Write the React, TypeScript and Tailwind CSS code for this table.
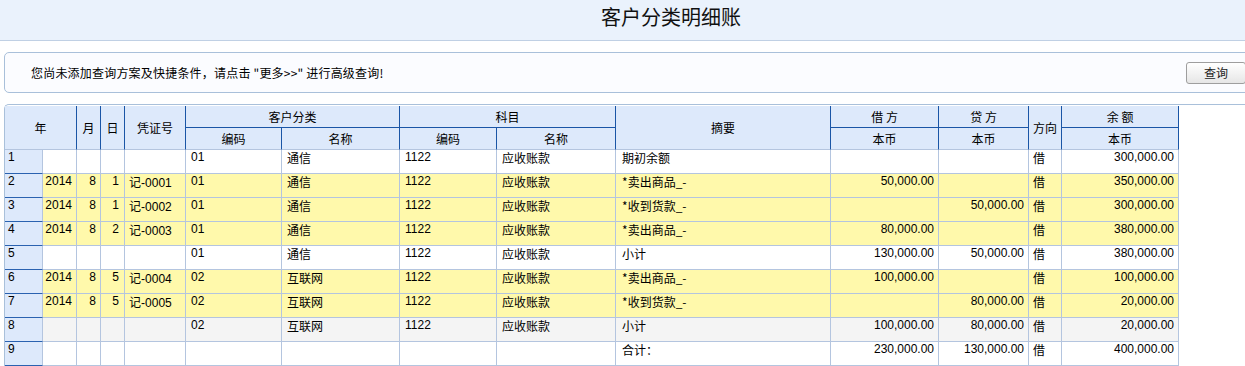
import React from 'react';

type Row = {
    n: number;
    y: string;
    m: string;
    d: string;
    v: string;
    c: string;
    cn: string;
    a: string;
    an: string;
    s: string;
    dr: string;
    cr: string;
    dir: string;
    bal: string;
    bg: 'white' | 'yellow' | 'gray';
};

const rows: Row[] = [
    { n: 1, y: '', m: '', d: '', v: '', c: '01', cn: '通信', a: '1122', an: '应收账款', s: '期初余额', dr: '', cr: '', dir: '借', bal: '300,000.00', bg: 'white' },
    { n: 2, y: '2014', m: '8', d: '1', v: '记-0001', c: '01', cn: '通信', a: '1122', an: '应收账款', s: '*卖出商品_-', dr: '50,000.00', cr: '', dir: '借', bal: '350,000.00', bg: 'yellow' },
    { n: 3, y: '2014', m: '8', d: '1', v: '记-0002', c: '01', cn: '通信', a: '1122', an: '应收账款', s: '*收到货款_-', dr: '', cr: '50,000.00', dir: '借', bal: '300,000.00', bg: 'yellow' },
    { n: 4, y: '2014', m: '8', d: '2', v: '记-0003', c: '01', cn: '通信', a: '1122', an: '应收账款', s: '*卖出商品_-', dr: '80,000.00', cr: '', dir: '借', bal: '380,000.00', bg: 'yellow' },
    { n: 5, y: '', m: '', d: '', v: '', c: '01', cn: '通信', a: '1122', an: '应收账款', s: '小计', dr: '130,000.00', cr: '50,000.00', dir: '借', bal: '380,000.00', bg: 'white' },
    { n: 6, y: '2014', m: '8', d: '5', v: '记-0004', c: '02', cn: '互联网', a: '1122', an: '应收账款', s: '*卖出商品_-', dr: '100,000.00', cr: '', dir: '借', bal: '100,000.00', bg: 'yellow' },
    { n: 7, y: '2014', m: '8', d: '5', v: '记-0005', c: '02', cn: '互联网', a: '1122', an: '应收账款', s: '*收到货款_-', dr: '', cr: '80,000.00', dir: '借', bal: '20,000.00', bg: 'yellow' },
    { n: 8, y: '', m: '', d: '', v: '', c: '02', cn: '互联网', a: '1122', an: '应收账款', s: '小计', dr: '100,000.00', cr: '80,000.00', dir: '借', bal: '20,000.00', bg: 'gray' },
    { n: 9, y: '', m: '', d: '', v: '', c: '', cn: '', a: '', an: '', s: '合计：', dr: '230,000.00', cr: '130,000.00', dir: '借', bal: '400,000.00', bg: 'white' },
];

const colWidths = [38, 34, 24, 24, 61, 96, 118, 97, 119, 215, 108, 90, 33, 117];

const bgClass = {
    white: 'bg-white',
    yellow: 'bg-[#fff9ab]',
    gray: 'bg-[#f4f4f4]',
};

// 表头单元格：深蓝竖线
const th = 'border-r border-b border-[#1a55a6] bg-[#dde9fb] font-normal text-center align-middle p-0';
const thLast = 'border-r border-b border-r-[#1a55a6] border-b-[#b4c5df] bg-[#dde9fb] font-normal text-center align-middle p-0';
// 数据单元格：浅色网格
const td = 'border-r border-b border-[#b4c5df] align-top p-0 leading-[15px] whitespace-nowrap overflow-hidden';
const num = "font-['Liberation_Sans'] text-[12px]";

const Voucher = ({ v }: { v: string }) => {
    if (!v) return null;
    const [head, tail] = v.split('-');
    return (
        <>
            <span>{head}</span>
            <span className={num}>-{tail}</span>
        </>
    );
};

export default function App() {
    return (
        <div className="w-[1245px] h-[366px] overflow-hidden bg-white text-black text-[12px] font-['Noto_Sans_CJK_SC',sans-serif]">
            {/* 标题 */}
            <div className="h-[41px] bg-[#eaf2fc] border-b border-[#c0d0e4] pl-[601px] pt-[5px]">
                <span className="text-[20px] leading-[24px] text-[#111]">客户分类明细账</span>
            </div>

            {/* 查询提示 */}
            <div className="mt-[11px] ml-[4px] w-[1260px] h-[41px] border border-[#a9c0da] rounded-[5px] bg-[#fbfcff] flex items-center">
                <span className="pl-[26px] flex-1 tracking-[0.2px]">
                    您尚未添加查询方案及快捷条件，请点击 "更多&gt;&gt;" 进行高级查询!
                </span>
                <button className="mr-[17px] mt-[1px] w-[60px] h-[22px] border border-[#9e9e9e] rounded-[3px] bg-gradient-to-b from-white to-[#e6e6e6] text-[12px] text-[#222] leading-[20px]">
                    查询
                </button>
            </div>

            {/* 明细表 */}
            <div className="mt-[11px] ml-[4px] w-[1260px] border-t border-l border-[#a9c0da] rounded-tl-[5px] pt-[1px]">
                <table className="table-fixed border-separate border-spacing-0 w-[1174px]">
                    <colgroup>
                        {colWidths.map((w, i) => (
                            <col key={i} style={{ width: w }} />
                        ))}
                    </colgroup>
                    <thead>
                        <tr className="h-[22px]">
                            <th rowSpan={2} colSpan={2} className={thLast}>年</th>
                            <th rowSpan={2} className={thLast}>月</th>
                            <th rowSpan={2} className={thLast}>日</th>
                            <th rowSpan={2} className={thLast}>凭证号</th>
                            <th colSpan={2} className={th}>客户分类</th>
                            <th colSpan={2} className={th}>科目</th>
                            <th rowSpan={2} className={thLast}>摘要</th>
                            <th className={th}>借&nbsp;方</th>
                            <th className={th}>贷&nbsp;方</th>
                            <th rowSpan={2} className={thLast}>方向</th>
                            <th className={th}>余&nbsp;额</th>
                        </tr>
                        <tr className="h-[22px]">
                            <th className={thLast}>编码</th>
                            <th className={thLast}>名称</th>
                            <th className={thLast}>编码</th>
                            <th className={thLast}>名称</th>
                            <th className={thLast}>本币</th>
                            <th className={thLast}>本币</th>
                            <th className={thLast}>本币</th>
                        </tr>
                    </thead>
                    <tbody>
                        {rows.map((r) => (
                            <tr key={r.n} className="h-[24px]">
                                <td className={`${td} bg-[#dde9fb] border-b-[#2a62b0] pl-[3px] ${num}`}>{r.n}</td>
                                <td className={`${td} ${bgClass[r.bg]} text-right pr-[4px] ${num}`}>{r.y}</td>
                                <td className={`${td} ${bgClass[r.bg]} text-right pr-[4px] ${num}`}>{r.m}</td>
                                <td className={`${td} ${bgClass[r.bg]} text-right pr-[5px] ${num}`}>{r.d}</td>
                                <td className={`${td} ${bgClass[r.bg]} pl-[4px]`}><Voucher v={r.v} /></td>
                                <td className={`${td} ${bgClass[r.bg]} pl-[5px] ${num}`}>{r.c}</td>
                                <td className={`${td} ${bgClass[r.bg]} pl-[5px]`}>{r.cn}</td>
                                <td className={`${td} ${bgClass[r.bg]} pl-[5px] ${num}`}>{r.a}</td>
                                <td className={`${td} ${bgClass[r.bg]} pl-[5px]`}>{r.an}</td>
                                <td className={`${td} ${bgClass[r.bg]} pl-[6px]`}>{r.s}</td>
                                <td className={`${td} ${bgClass[r.bg]} text-right pr-[4px] ${num}`}>{r.dr}</td>
                                <td className={`${td} ${bgClass[r.bg]} text-right pr-[4px] ${num}`}>{r.cr}</td>
                                <td className={`${td} ${bgClass[r.bg]} pl-[4px]`}>{r.dir}</td>
                                <td className={`${td} ${bgClass[r.bg]} text-right pr-[4px] ${num}`}>{r.bal}</td>
                            </tr>
                        ))}
                    </tbody>
                </table>
            </div>
        </div>
    );
}
